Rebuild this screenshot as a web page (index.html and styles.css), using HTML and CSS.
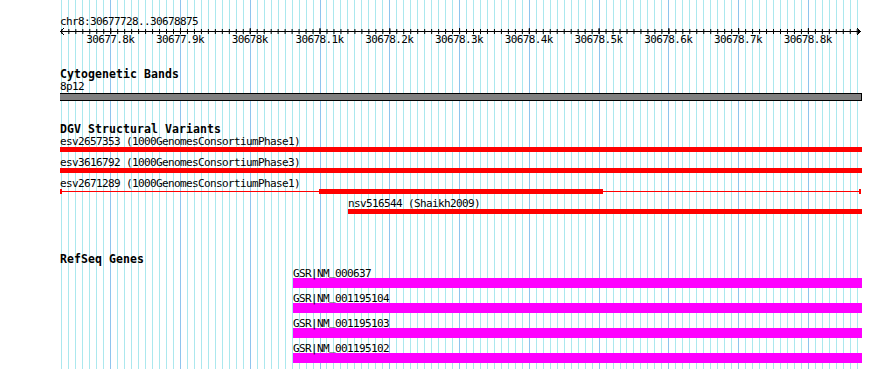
FILE: index.html
```html
<!DOCTYPE html>
<html lang="en">
<head>
    <meta charset="UTF-8">
    <meta name="viewport" content="width=device-width, initial-scale=1.0">
    <title>chr8:30677728..30678875</title>
    <link rel="stylesheet" href="styles.css">
</head>
<body>
    <div class="panel">
        <!-- position ruler -->
        <div class="ruler">
            <div class="pos-label">chr8:30677728..30678875</div>
            <svg class="axis" width="802" height="7" viewBox="0 0 802 7">
                <defs>
                    <pattern id="minor-tick" x="1.36" y="0" width="6.977" height="7" patternUnits="userSpaceOnUse">
                        <rect x="0" y="2" width="1" height="5"></rect>
                    </pattern>
                    <pattern id="major-tick" x="50.2" y="0" width="69.77" height="7" patternUnits="userSpaceOnUse">
                        <rect x="0" y="1" width="1" height="6"></rect>
                    </pattern>
                </defs>
                <rect x="1" y="0" width="799" height="7" fill="url(#minor-tick)"></rect>
                <rect x="1" y="0" width="799" height="7" fill="url(#major-tick)"></rect>
                <rect x="1" y="4" width="799" height="1"></rect>
                <polyline points="4,1 1,4.5 4,8" fill="none" stroke="#000"></polyline>
                <polyline points="797,1 800,4.5 797,8" fill="none" stroke="#000"></polyline>
            </svg>
            <div class="ticks">
                <span>30677.8k</span>
                <span>30677.9k</span>
                <span>30678k</span>
                <span>30678.1k</span>
                <span>30678.2k</span>
                <span>30678.3k</span>
                <span>30678.4k</span>
                <span>30678.5k</span>
                <span>30678.6k</span>
                <span>30678.7k</span>
                <span>30678.8k</span>
            </div>
        </div>

        <!-- Cytogenetic Bands -->
        <section class="track track-bands">
            <h2 class="track-title">Cytogenetic Bands</h2>
            <div class="feat-label">8p12</div>
            <div class="band"></div>
        </section>

        <!-- DGV Structural Variants -->
        <section class="track track-dgv">
            <h2 class="track-title">DGV Structural Variants</h2>
            <div class="feature">
                <div class="feat-label">esv2657353 (1000GenomesConsortiumPhase1)</div>
                <div class="bar bar-red"></div>
            </div>
            <div class="feature">
                <div class="feat-label">esv3616792 (1000GenomesConsortiumPhase3)</div>
                <div class="bar bar-red"></div>
            </div>
            <div class="feature">
                <div class="feat-label">esv2671289 (1000GenomesConsortiumPhase1)</div>
                <div class="split">
                    <i class="cap"></i>
                    <i class="thin" style="width: 257px"></i>
                    <i class="thick" style="width: 284px"></i>
                    <i class="thin thin-fill"></i>
                    <i class="cap"></i>
                </div>
            </div>
            <div class="feature feature-tight" style="margin-left: 288px">
                <div class="feat-label">nsv516544 (Shaikh2009)</div>
                <div class="bar bar-red"></div>
            </div>
        </section>

        <!-- RefSeq Genes -->
        <section class="track track-genes">
            <h2 class="track-title">RefSeq Genes</h2>
            <div class="gene" style="margin-left: 233px">
                <div class="feat-label">GSR|NM<span class="us">_</span>000637</div>
                <div class="bar bar-gene"></div>
            </div>
            <div class="gene" style="margin-left: 233px">
                <div class="feat-label">GSR|NM<span class="us">_</span>001195104</div>
                <div class="bar bar-gene"></div>
            </div>
            <div class="gene" style="margin-left: 233px">
                <div class="feat-label">GSR|NM<span class="us">_</span>001195103</div>
                <div class="bar bar-gene"></div>
            </div>
            <div class="gene" style="margin-left: 233px">
                <div class="feat-label">GSR|NM<span class="us">_</span>001195102</div>
                <div class="bar bar-gene"></div>
            </div>
        </section>
    </div>
</body>
</html>
```

FILE: styles.css
```css
body {
    margin: 0;
    background: #fff;
    color: #000;
    font-family: 'DejaVu Sans Mono', 'Liberation Mono', monospace;
}
.panel {
    margin-left: 60px;
    width: 802px;
    height: 369px;
    overflow: hidden;
    /* 100bp lines over 10bp lines */
    background-image:
        repeating-linear-gradient(to right, transparent 0 50.2px, #8fc4ee 50.2px 51.2px, transparent 51.2px 69.77px),
        repeating-linear-gradient(to right, transparent 0 1.36px, #abe8ee 1.36px 2.36px, transparent 2.36px 6.977px);
}
.ruler {
    padding-top: 16px;
}
.pos-label,
.feat-label,
.ticks {
    font-size: 11px;
    line-height: 11px;
    height: 11px;
    letter-spacing: -0.62px;
    white-space: nowrap;
}
.us {
    vertical-align: 2px;
}
.axis {
    display: block;
    overflow: visible;
    shape-rendering: crispEdges;
}
.ticks {
    display: flex;
    padding-left: 15.3px;
}
.ticks span {
    flex: 0 0 69.77px;
    text-align: center;
}
.track-title {
    margin: 0;
    font-size: 11.5px;
    font-weight: bold;
    line-height: 14px;
    height: 14px;
    letter-spacing: 0.08px;
    white-space: nowrap;
}
.track-bands {
    margin-top: 22px;
}
.band {
    box-sizing: border-box;
    height: 8px;
    margin: 1px 0 0 -1px;
    border: 1px solid #000;
    background: #808080;
}
.track-dgv {
    margin-top: 21px;
}
.feature + .feature {
    margin-top: 5px;
}
.feature + .feature-tight {
    margin-top: 4px;
}
.bar {
    height: 5px;
}
.bar-red {
    background: #f00;
}
.split {
    display: flex;
    align-items: center;
    width: 801px;
    height: 5px;
}
.split i {
    display: block;
    flex: none;
}
.split .cap {
    width: 2px;
    height: 5px;
    background: #f00;
}
.split .thin {
    height: 1px;
    background: #f00;
}
.split .thin-fill {
    flex: 1;
}
.split .thick {
    height: 5px;
    background: #f00;
}
.track-genes {
    margin-top: 38px;
}
.gene + .gene {
    margin-top: 3px;
}
.bar-gene {
    height: 10px;
    margin-top: 1px;
    background: #f0f;
}
```
